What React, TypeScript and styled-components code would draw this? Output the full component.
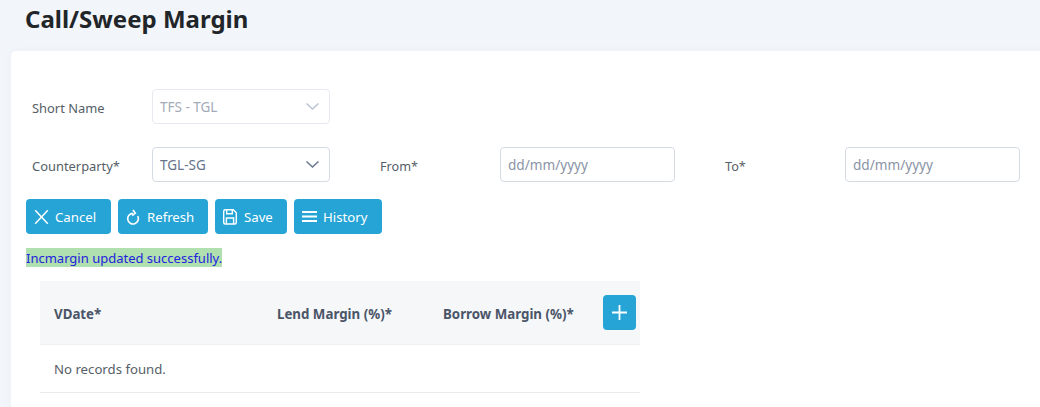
import styled, { createGlobalStyle } from "styled-components";

const GlobalStyle = createGlobalStyle`
    html, body {
        margin: 0;
        height: 100%;
        overflow: hidden;
        background: #f2f5f9;
        font-family: "Noto Sans", "Open Sans", sans-serif;
    }
`;

const Chevron = () => (
    <svg width="13" height="7" viewBox="0 0 13 7" fill="none" stroke="currentColor" strokeWidth="1.5">
        <path d="M0.5 0.5 L6.5 6 L12.5 0.5" />
    </svg>
);

const CancelIcon = () => (
    <svg width="15" height="17" viewBox="0 0 15 17" fill="none" stroke="currentColor" strokeWidth="1.5">
        <path d="M1.2 2.2 L13.8 15.8 M13.8 2.2 L1.2 15.8" />
    </svg>
);

const RefreshIcon = () => (
    <svg width="15" height="17" viewBox="0 0 15 17" fill="none" stroke="currentColor" strokeWidth="1.6">
        <path d="M7 5.4 A5.3 5.3 0 1 0 11.7 8.2" />
        <path d="M7 2 L9.3 5.2 L6.2 7.6" />
    </svg>
);

const SaveIcon = () => (
    <svg width="15" height="17" viewBox="0 0 15 17" fill="none" stroke="currentColor" strokeWidth="1.4">
        <path d="M2.2 1.7 H10.3 L13.3 4.7 V14.5 A1.5 1.5 0 0 1 11.8 16 H2.2 A1.5 1.5 0 0 1 0.7 14.5 V3.2 A1.5 1.5 0 0 1 2.2 1.7 Z" />
        <path d="M3.7 1.7 V5.7 H9.3 V1.7" />
        <path d="M3.4 16 V10 H10.6 V16" />
    </svg>
);

const BarsIcon = () => (
    <svg width="15" height="17" viewBox="0 0 15 17" fill="none" stroke="currentColor" strokeWidth="2">
        <path d="M0 4 H15 M0 8.5 H15 M0 13 H15" />
    </svg>
);

const PlusIcon = () => (
    <svg width="15" height="15" viewBox="0 0 15 15" fill="none" stroke="currentColor" strokeWidth="1.8">
        <path d="M7.5 0 V15 M0 7.5 H15" />
    </svg>
);

export default function App() {
    return (
        <>
            <GlobalStyle />
            <Page>
                <Title>Call/Sweep Margin</Title>
                <Card>
                    <FormRow>
                        <Label>Short Name</Label>
                        <Select $disabled>
                            <span>TFS - TGL</span>
                            <Chevron />
                        </Select>
                    </FormRow>
                    <FormRow $tight>
                        <Label>Counterparty*</Label>
                        <Select>
                            <span>TGL-SG</span>
                            <Chevron />
                        </Select>
                        <DateLabel>From*</DateLabel>
                        <DateInput>dd/mm/yyyy</DateInput>
                        <DateLabel>To*</DateLabel>
                        <DateInput>dd/mm/yyyy</DateInput>
                    </FormRow>
                    <Toolbar>
                        <Button $width={85}><CancelIcon />Cancel</Button>
                        <Button $width={90}><RefreshIcon />Refresh</Button>
                        <Button $width={72}><SaveIcon />Save</Button>
                        <Button $width={88}><BarsIcon />History</Button>
                    </Toolbar>
                    <Message>Incmargin updated successfully.</Message>
                    <Table>
                        <HeadRow>
                            <DateHead>VDate*</DateHead>
                            <LendHead>Lend Margin (%)*</LendHead>
                            <BorrowHead>Borrow Margin (%)*</BorrowHead>
                            <AddButton><PlusIcon /></AddButton>
                        </HeadRow>
                        <EmptyRow>No records found.</EmptyRow>
                    </Table>
                </Card>
            </Page>
        </>
    );
}

const Page = styled.div`
    width: 1040px;
    height: 407px;
    overflow: hidden;
`;

const Title = styled.h1`
    margin: 0;
    padding: 3px 0 0 25px;
    height: 51px;
    box-sizing: border-box;
    font-size: 24px;
    line-height: 32px;
    font-weight: 700;
    color: #212529;
`;

const Card = styled.div`
    width: 1100px;
    height: 400px;
    margin-left: 11px;
    padding: 38px 0 0 15px;
    box-sizing: border-box;
    background: #fff;
    border-radius: 5px;
    box-shadow: 0 0 8px rgba(0, 0, 0, 0.03);
`;

const FormRow = styled.div<{ $tight?: boolean }>`
    display: flex;
    align-items: center;
    height: 35px;
    margin-top: ${(p) => (p.$tight ? "23px" : "0")};
`;

const Label = styled.label`
    width: 126px;
    padding-left: 6px;
    box-sizing: border-box;
    font-size: 12.9px;
    color: #565e67;
    padding-top: 2px;
`;

const Select = styled.div<{ $disabled?: boolean }>`
    width: 178px;
    height: 35px;
    box-sizing: border-box;
    display: flex;
    align-items: center;
    justify-content: space-between;
    padding: 0 10px 0 7px;
    border: 1px solid ${(p) => (p.$disabled ? "#e6e9ef" : "#d5dbe5")};
    border-radius: 4px;
    font-size: 13.5px;
    color: ${(p) => (p.$disabled ? "#a3acb8" : "#64748b")};

    svg {
        color: ${(p) => (p.$disabled ? "#bcc4d0" : "#6b7a90")};
    }
`;

const DateLabel = styled.label`
    width: 120px;
    margin-left: 50px;
    font-size: 12.7px;
    color: #565e67;
    padding-top: 2px;
`;

const DateInput = styled.div`
    width: 175px;
    height: 35px;
    box-sizing: border-box;
    display: flex;
    align-items: center;
    padding-left: 7px;
    border: 1px solid #d5dbe5;
    border-radius: 4px;
    font-size: 13.6px;
    color: #8a94a6;
`;

const Toolbar = styled.div`
    display: flex;
    gap: 7px;
    margin-top: 17px;
`;

const Button = styled.button<{ $width: number }>`
    width: ${(p) => p.$width}px;
    height: 35px;
    padding: 0 0 0 8px;
    display: flex;
    align-items: center;
    gap: 6px;
    border: none;
    border-radius: 4px;
    background: #26a4d6;
    color: #fff;
    font-family: inherit;
    font-size: 13.2px;
`;

const Message = styled.div`
    width: fit-content;
    height: 19px;
    margin-top: 14px;
    background: #b0dfb0;
    color: #2222dd;
    font-size: 13px;
    line-height: 21px;
`;

const Table = styled.div`
    width: 600px;
    margin: 14px 0 0 14px;
`;

const HeadRow = styled.div`
    height: 64px;
    display: flex;
    align-items: center;
    background: #f6f7f9;
    border-bottom: 1px solid #edeff2;
    box-sizing: border-box;
    font-size: 13.3px;
    font-weight: 700;
    color: #4a5568;
`;

const HeadText = styled.div`
    padding-top: 2px;
    box-sizing: border-box;
`;

const DateHead = styled(HeadText)`
    width: 237px;
    padding-left: 14px;
`;

const LendHead = styled(HeadText)`
    width: 166px;
`;

const BorrowHead = styled(HeadText)`
    width: 160px;
`;

const AddButton = styled.button`
    width: 33px;
    height: 35px;
    display: flex;
    align-items: center;
    justify-content: center;
    padding: 0;
    border: none;
    border-radius: 4px;
    background: #26a4d6;
    color: #fff;
`;

const EmptyRow = styled.div`
    height: 47px;
    display: flex;
    align-items: center;
    padding-left: 14px;
    border-bottom: 1px solid #e9ecef;
    font-size: 13.2px;
    color: #565e67;
`;
